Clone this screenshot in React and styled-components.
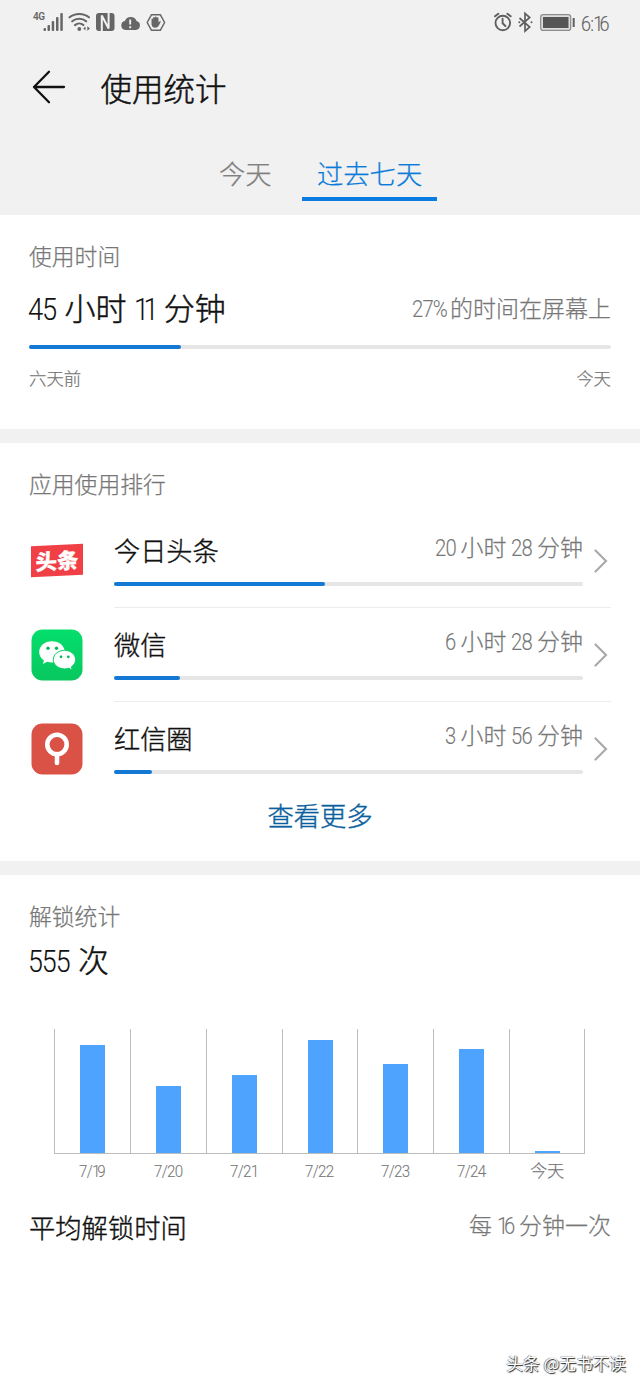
import React from "react";
import styled, { createGlobalStyle } from "styled-components";

const apps = [
  { name: "今日头条", time: "20 小时 28 分钟", percent: 45, icon: "toutiao" },
  { name: "微信", time: "6 小时 28 分钟", percent: 14, icon: "wechat" },
  { name: "红信圈", time: "3 小时 56 分钟", percent: 8, icon: "circle" },
];

const unlocks = [
  { day: "7/19", height: 108 },
  { day: "7/20", height: 67 },
  { day: "7/21", height: 78 },
  { day: "7/22", height: 113 },
  { day: "7/23", height: 89 },
  { day: "7/24", height: 104 },
  { day: "今天", height: 2 },
];

// space (in em) that a condensed number gives back to the line
const spareWidth = part =>
  [...part].reduce((sum, c) => sum + (c === "1" ? 0.35 : 0.52), 0) * 0.12 -
  (/[1%]$/.test(part) ? 0.09 : 0);

// digits get a light, condensed face next to the chinese text,
// and the "1" is narrower than the other digits
const Text = ({ children }) =>
  children
    .split(/([\d/%:]+)/)
    .filter(Boolean)
    .map((part, i) =>
      /^[\d/%:]+$/.test(part) ? (
        <Num key={i} $spare={spareWidth(part)}>
          {part
            .split(/(1)/)
            .filter(Boolean)
            .map((s, j) => (s === "1" ? <One key={j}>1</One> : s))}
        </Num>
      ) : (
        part
      )
    );

const StatusIcons = () => (
  <svg width="134" height="24" viewBox="32 10 134 24" fill="none">
    <g fill="#666">
      <rect x="43.5" y="28" width="2.5" height="3" rx="1" />
      <rect x="47.5" y="25" width="2.5" height="6" rx="1" />
      <rect x="51.7" y="21" width="2.5" height="10" rx="1" />
      <rect x="56" y="17" width="2.5" height="14" rx="1" />
      <rect x="60.3" y="13" width="2.5" height="18" rx="1" />
    </g>
    <g stroke="#666" strokeWidth="2.1" strokeLinecap="round">
      <path d="M69.5 17.3c5.5-4.4 14-4.4 19.5 0" />
      <path d="M72.2 21.3c4-3.4 10-3.4 14 0" />
      <path d="M75 25.1c2.5-2.2 6-2.2 8.4 0" />
    </g>
    <circle cx="79.3" cy="29" r="1.9" fill="#666" />
    <path d="M85.5 26.5v4l-2.3-2zM87.3 26.3v4.5l2.7-2.2z" fill="#666" />
    <rect x="96" y="13" width="18.5" height="18" rx="3" fill="#666" />
    <path d="M101.8 31V15.5l6.800 13V13" stroke="#f1f1f1" strokeWidth="2" />
    <path
      d="M125.500 30a4.500 4.500 0 0 1-.6-8.900 6.200 6.200 0 0 1 11.700-.1 4.600 4.600 0 0 1-.8 9z"
      fill="#666"
    />
    <path d="M130.200 19.500v5M130.200 26.300v2" stroke="#f1f1f1" strokeWidth="1.900" />
    <path
      d="M151.500 14.700h8.800l4.300 7.800-4.300 7.800h-8.800l-4.300-7.800z"
      stroke="#666"
      strokeWidth="1.500"
      strokeLinejoin="round"
    />
    <path
      d="M151.500 24v-4.500q0-1 .8-1t.8 1V18q0-1 .9-1t.9 1v-.6q0-1 .9-1t.9 1v.8q0-.9.9-.9t.9.900v4l1.200-1q1.100-.5 1.100.6l-2.200 4.200q-1 1.800-3.200 1.800-4 0-4-4.600z"
      fill="#666"
    />
  </svg>
);

const SystemIcons = () => (
  <svg width="84" height="24" viewBox="492 10 84 24" fill="none">
    <g stroke="#606060" strokeWidth="1.900" strokeLinecap="round">
      <circle cx="502.800" cy="23" r="7.300" />
      <path d="M502.600 18.800v4.500l2.800 2.700M495 16.300l3.300-2.600M510.700 16.300l-3.300-2.600" />
    </g>
    <path
      d="M519.500 18l10.200 9-4.700 4.200V13.300l4.700 4.200-10.200 9"
      stroke="#606060"
      strokeWidth="1.700"
    />
    <circle cx="519.300" cy="22.300" r="1" fill="#606060" />
    <circle cx="531.500" cy="22.300" r="1" fill="#606060" />
    <rect x="540.700" y="14.600" width="30" height="15.800" rx="2.500" fill="#ddd" stroke="#8b8b8b" strokeWidth="1.200" />
    <rect x="543" y="17" width="25.500" height="11" fill="#555" />
    <path d="M573.700 18v9" stroke="#606060" strokeWidth="2" />
  </svg>
);

const BackArrow = () => (
  <svg width="34" height="34" viewBox="0 0 34 34" fill="none">
    <path
      d="M17 1.700L2 17l15 15.300M2 17h30"
      stroke="#111"
      strokeWidth="2.300"
      strokeLinecap="round"
      strokeLinejoin="round"
    />
  </svg>
);

const Chevron = () => (
  <svg width="14" height="24" viewBox="0 0 14 24" fill="none">
    <path d="M1.500 1.500L12 12 1.500 22.500" stroke="#aaa" strokeWidth="2.200" strokeLinecap="round" />
  </svg>
);

const WechatIcon = () => (
  <svg width="52" height="52" viewBox="0 0 52 52">
    <defs>
      <linearGradient id="wx" x1="0" y1="0" x2="0" y2="1">
        <stop offset="0" stopColor="#04df6c" />
        <stop offset="1" stopColor="#08c75f" />
      </linearGradient>
    </defs>
    <rect x=".5" y=".5" width="51" height="51" rx="11" fill="url(#wx)" />
    <path
      d="M21 12.300c-7.200 0-12.800 4.700-12.800 10.700 0 3.400 1.800 6.300 4.700 8.300l-1 3.600 4.200-2.200c1.500.5 3.200.8 4.900.8 7.200 0 12.800-4.500 12.800-10.500S28.200 12.300 21 12.300z"
      fill="#fff"
    />
    <path
      d="M33.500 21.300c-6.300 0-11.200 4.200-11.200 9.300s4.900 9.300 11.200 9.300c1.500 0 2.900-.3 4.200-.7l3.600 1.900-.9-3.200c2.600-1.800 4.200-4.300 4.200-7.300 0-5.100-4.800-9.300-11.100-9.300z"
      fill="#fff"
      stroke="#06d164"
      strokeWidth="1"
    />
    <g fill="#07b95a">
      <circle cx="17" cy="19.300" r="1.700" />
      <circle cx="25.500" cy="19.300" r="1.700" />
      <circle cx="30" cy="27.800" r="1.400" />
      <circle cx="37.300" cy="27.800" r="1.400" />
    </g>
  </svg>
);

const CircleIcon = () => (
  <svg width="52" height="52" viewBox="0 0 52 52" fill="none">
    <rect x=".5" y=".5" width="51" height="51" rx="11" fill="#d95245" />
    <circle cx="26" cy="21.500" r="9.700" stroke="#fff" strokeWidth="4.600" />
    <path d="M26 31v9" stroke="#fff" strokeWidth="4.600" strokeLinecap="round" />
  </svg>
);

const AppIcon = ({ type }) => {
  if (type === "wechat") return <WechatIcon />;
  if (type === "circle") return <CircleIcon />;
  return <ToutiaoLogo>头条</ToutiaoLogo>;
};

const AppRow = ({ app }) => (
  <Row>
    <IconBox>
      <AppIcon type={app.icon} />
    </IconBox>
    <RowBody>
      <RowMain>
        <RowText>
          <AppName>{app.name}</AppName>
          <AppTime>
            <Text>{app.time}</Text>
          </AppTime>
        </RowText>
        <Track>
          <Fill style={{ width: `${app.percent}%` }} />
        </Track>
      </RowMain>
      <Chevron />
    </RowBody>
  </Row>
);

const App = () => {
  return (
    <>
      <GlobalStyle />
      <Page>
        <Header>
          <StatusBar>
            <StatusGroup>
              <Network>4G</Network>
              <StatusIcons />
            </StatusGroup>
            <StatusGroup>
              <SystemIcons />
              <Clock>
                <Text>6:16</Text>
              </Clock>
            </StatusGroup>
          </StatusBar>
          <TitleBar>
            <BackArrow />
            <h1>使用统计</h1>
          </TitleBar>
          <Tabs>
            <Tab>今天</Tab>
            <Tab $active>过去七天</Tab>
          </Tabs>
        </Header>

        <Section $height={214}>
          <Label>使用时间</Label>
          <TotalRow>
            <Total>
              <Text>45 小时 11 分钟</Text>
            </Total>
            <Note>
              <Text>27%的时间在屏幕上</Text>
            </Note>
          </TotalRow>
          <Track>
            <Fill style={{ width: "26.1%" }} />
          </Track>
          <Range>
            <span>六天前</span>
            <span>今天</span>
          </Range>
        </Section>

        <Divider />

        <Section $height={418}>
          <Label>应用使用排行</Label>
          <AppList>
            {apps.map(app => (
              <AppRow key={app.name} app={app} />
            ))}
          </AppList>
          <More>查看更多</More>
        </Section>

        <Divider />

        <Section $height={512}>
          <Label>解锁统计</Label>
          <Unlocks>
            <Text>555 次</Text>
          </Unlocks>
          <Chart>
            {unlocks.map(item => (
              <Column key={item.day}>
                <Cell>
                  <Bar style={{ height: item.height }} />
                </Cell>
                <Day>
                  <Text>{item.day}</Text>
                </Day>
              </Column>
            ))}
          </Chart>
          <Average>
            <h2>平均解锁时间</h2>
            <Note>
              <Text>每 16 分钟一次</Text>
            </Note>
          </Average>
          <Watermark>头条 @无书不读</Watermark>
        </Section>
      </Page>
    </>
  );
};

export default App;

const GlobalStyle = createGlobalStyle`
  * {
    margin: 0;
    padding: 0;
    box-sizing: border-box;
  }

  body {
    background-color: #fff;
    font-family: "Noto Sans CJK SC", sans-serif;
    font-weight: 300;
    -webkit-text-stroke: 0.25px currentColor;
    color: #111;
  }

  svg {
    display: block;
    flex-shrink: 0;
  }
`;

const Page = styled.div`
  width: 640px;
  height: 1387px;
  overflow: hidden;
`;

const Num = styled.span`
  display: inline-block;
  margin-left: -0.02em;
  margin-right: ${props => -props.$spare}em;
  font-family: Roboto, "Liberation Sans", sans-serif;
  font-weight: 300;
  line-height: 1;
  letter-spacing: -0.04em;
  transform: scaleX(0.88);
  transform-origin: left center;
  -webkit-text-stroke: 0.1px currentColor;
`;

const One = styled.span`
  letter-spacing: -0.21em;
`;

const Header = styled.header`
  height: 215px;
  background-color: #f1f1f1;
`;

const StatusBar = styled.div`
  height: 46px;
  padding: 10px 29px 0 32px;
  display: flex;
  justify-content: space-between;
`;

const StatusGroup = styled.div`
  display: flex;
  align-items: flex-start;
`;

const Network = styled.span`
  width: 11px;
  margin-right: -11px;
  padding: 2px 0 0 1px;
  font-family: Roboto, sans-serif;
  font-size: 10px;
  font-weight: 600;
  line-height: 10px;
  letter-spacing: -0.5px;
  -webkit-text-stroke: 0;
  color: #666;
`;

const Clock = styled.span`
  width: 35px;
  padding-left: 5px;
  font-size: 20.500px;
  line-height: 24px;
  color: #606060;
`;

const TitleBar = styled.div`
  display: flex;
  align-items: center;
  height: 82px;
  padding-left: 32px;
  gap: 34.500px;

  h1 {
    font-size: 31.500px;
    font-weight: 300;
    line-height: 40px;
    -webkit-text-stroke-width: 0.5px;
  }
`;

const Tabs = styled.div`
  display: flex;
  padding-left: 204px;
  height: 73px;
  gap: 15px;
`;

const Tab = styled.div`
  width: ${props => (props.$active ? "135px" : "83px")};
  padding: 25px 15px 0;
  font-size: 26.300px;
  line-height: 40px;
  white-space: nowrap;
  color: ${props => (props.$active ? "#0a7bd8" : "#808080")};

  &::after {
    content: "";
    display: ${props => (props.$active ? "block" : "none")};
    height: 4px;
    margin: 4px -15px 0;
    background-color: #0a7be0;
  }
`;

const Section = styled.section`
  height: ${props => props.$height}px;
  padding: 23px 29px 0;
`;

const Divider = styled.div`
  height: 14px;
  background-color: #f1f1f1;
`;

const Label = styled.p`
  font-size: 22.800px;
  line-height: 36px;
  color: #777;
`;

const TotalRow = styled.div`
  display: flex;
  justify-content: space-between;
  height: 71px;
`;

const Total = styled.p`
  padding-top: 13px;
  font-size: 31px;
  line-height: 40px;
  word-spacing: 0.04em;
  -webkit-text-stroke-width: 0.5px;
`;

const Note = styled.span`
  padding-top: 14px;
  font-size: 23px;
  line-height: 38px;
  color: #777;
`;

const Track = styled.div`
  height: 4px;
  border-radius: 2px;
  background-color: #e6e6e6;
`;

const Fill = styled.div`
  height: 4px;
  border-radius: 2px;
  background-color: #1479d4;
`;

const Range = styled.div`
  display: flex;
  justify-content: space-between;
  margin-top: 16px;
  font-size: 17.400px;
  line-height: 26px;
  color: #777;
`;

const AppList = styled.div`
  height: 283px;
  padding-top: 12px;
`;

const Row = styled.div`
  display: flex;
  height: 94px;
  padding-left: 2px;
`;

const IconBox = styled.div`
  width: 52px;
  margin-right: 31px;
  padding-top: 21px;
`;

const ToutiaoLogo = styled.div`
  width: 52px;
  height: 31px;
  margin-top: 10px;
  background-color: #f03f45;
  color: #fff;
  font-size: 21.500px;
  font-weight: 900;
  line-height: 30px;
  text-align: center;
  transform: skewY(-3deg);
`;

const RowBody = styled.div`
  flex: 1;
  display: flex;
  justify-content: space-between;
  border-bottom: 1px solid #ededed;

  > svg {
    margin: 35px 3px 0 0;
  }

  ${Row}:last-child & {
    border-bottom: none;
  }
`;

const RowMain = styled.div`
  width: 469px;
  padding-top: 14px;
`;

const RowText = styled.div`
  display: flex;
  justify-content: space-between;
  height: 54px;
`;

const AppName = styled.span`
  font-size: 26.200px;
  line-height: 44px;
  -webkit-text-stroke-width: 0.4px;
`;

const AppTime = styled.span`
  font-size: 23px;
  line-height: 37px;
  color: #777;
`;

const More = styled.p`
  padding-top: 10px;
  text-align: center;
  font-size: 26.300px;
  line-height: 40px;
  -webkit-text-stroke-width: 0.4px;
  color: #0b5f9e;
`;

const Unlocks = styled.p`
  padding-top: 5px;
  font-size: 30.500px;
  line-height: 40px;
  word-spacing: 0.06em;
  -webkit-text-stroke-width: 0.5px;
`;

const Chart = styled.div`
  display: flex;
  margin: 50px 26px 0 25px;
`;

const Column = styled.div`
  flex: 1;

  &:last-child > div:first-child {
    border-right: 1px solid #bdbdbd;
  }
`;

const Cell = styled.div`
  display: flex;
  align-items: flex-end;
  justify-content: center;
  height: 125px;
  border-left: 1px solid #bdbdbd;
  border-bottom: 1px solid #bdbdbd;
`;

const Bar = styled.div`
  width: 25px;
  background-color: #4da3fd;
`;

const Day = styled.p`
  margin-top: 3px;
  text-align: center;
  font-size: 17.200px;
  line-height: 26px;
  color: #777;

  ${Num} {
    letter-spacing: -0.045em;
  }
`;

const Average = styled.div`
  display: flex;
  justify-content: space-between;
  height: 64px;
  padding-top: 24px;

  h2 {
    font-size: 26.300px;
    font-weight: 300;
    line-height: 40px;
    -webkit-text-stroke-width: 0.4px;
  }

  ${Note} {
    padding-top: 0;
    line-height: 34px;
  }
`;

const Watermark = styled.p`
  margin: 104px -15px 0 0;
  text-align: right;
  font-size: 16.700px;
  font-weight: 400;
  line-height: 24px;
  -webkit-text-stroke: 0;
  color: #fff;
  text-shadow: 1px 1px 1px #222, -0.5px -0.5px 1px #444;
`;
